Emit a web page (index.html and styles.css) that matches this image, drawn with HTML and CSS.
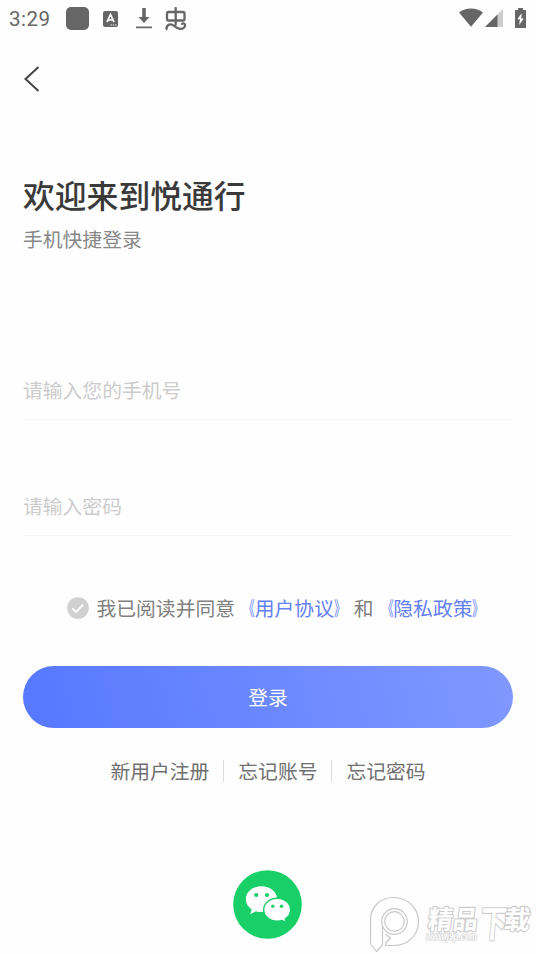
FILE: index.html
```html
<!DOCTYPE html>
<html lang="zh-CN">
<head>
<meta charset="utf-8">
<title>悦通行</title>
<link rel="stylesheet" href="styles.css">
</head>
<body>
<header class="status">
  <span class="time">3:29</span>
  <span class="square"></span>
  <svg class="ime" width="15" height="16" viewBox="0 0 15 16"><rect width="15" height="16" rx="2" fill="#666"/><path d="M4 11.200 7.500 3.500 11 11.200M5.300 8.800h4.400" fill="none" stroke="#fff" stroke-width="1.700"/><path d="M7.500 14h1.300m1 0h1.300m1 0h1.300" stroke="#fff" stroke-width="1.200"/></svg>
  <svg class="download" width="16" height="21" viewBox="0 0 16 21"><path d="M6.200 0h3.600v9H13.500L8 15 2.500 9h3.700zM0 18.600h16v1.700H0z" fill="#666"/></svg>
  <svg class="bug" width="22" height="24" viewBox="0 0 22 24" fill="none" stroke="#666" stroke-width="2.300" stroke-linecap="round" stroke-linejoin="round"><rect x="2" y="5" width="17.500" height="8.500" rx="1.500"/><path d="M2 9.300h17.500" stroke-width="0"/><path d="M10.700 1v16.500M1.500 22c0-5 4.500-5.800 7.500-3.200 3.500 3.400 8.500 4.200 10.600 1 1.400-2.600-.8-4.200-2.600-2.900"/></svg>
  <svg class="wifi" width="24" height="19" viewBox="0 0 24 19"><path d="M0 4.500C6.500-.9 17.500-.9 24 4.500L12 18.800z" fill="#666"/></svg>
  <svg class="signal" width="18" height="18" viewBox="0 0 18 18"><path d="M0 18 18 0v18z" fill="#ccc"/><path d="M0 18 12.500 5.500V18z" fill="#666"/></svg>
  <svg class="battery" width="11" height="20" viewBox="0 0 11 20"><path d="M3 0h5v2h3v18H0V2h3z" fill="#666"/><path d="M6.800 5 2.300 11.300h2.600L4.200 17l4.600-6.600H6.200z" fill="#fff"/></svg>
</header>
<main class="page">
  <button class="back" aria-label="返回"><svg width="18" height="28" viewBox="0 0 18 28"><path d="M15.500 2 2.500 14l13 12" fill="none" stroke="#444" stroke-width="2"/></svg></button>
  <h1>欢迎来到悦通行</h1>
  <p class="sub">手机快捷登录</p>
  <form>
    <input class="phone" type="tel" placeholder="请输入您的手机号">
    <input class="password" type="password" placeholder="请输入密码">
    <div class="agree">
      <svg width="22" height="22" viewBox="0 0 22 22"><circle cx="11" cy="11" r="10.800" fill="#d0d0d0"/><path d="m5.200 11.200 4 3.700 7-7.300" fill="none" stroke="#fff" stroke-width="2.100"/></svg>
      <span>我已阅读并同意<a><i class="open">《</i>用户协议<i class="close">》</i></a>和<a><i class="open">《</i>隐私政策<i class="close">》</i></a></span>
    </div>
    <button class="login" type="button">登录</button>
  </form>
  <nav><a>新用户注册</a><a>忘记账号</a><a>忘记密码</a></nav>
  <svg class="wechat" width="69" height="69" viewBox="0 0 69 69">
    <circle cx="34.500" cy="34.500" r="34.300" fill="#18cf68"/>
    <path d="M28.500 16.300c-8.700 0-15.700 5.700-15.700 13 0 4.200 2.300 7.700 5.900 10.100l-1.500 4.900 5.700-3c1.800.6 3.600.8 5.600.8 8.700 0 15.700-5.500 15.700-12.800s-7-13-15.700-13z" fill="#fff"/>
    <path d="M44.200 28.200c-7.500 0-13.500 5.100-13.500 11.500s6 11.500 13.500 11.500c1.800 0 3.400-.2 4.900-.7l4.300 2.200-1.200-3.900c3.300-2.100 5.400-5.400 5.400-9.100 0-6.400-6-11.500-13.400-11.500z" fill="#fff" stroke="#18cf68" stroke-width="1.400"/>
    <g fill="#18cf68"><circle cx="23.200" cy="25" r="2.100"/><circle cx="34" cy="25" r="2.100"/><circle cx="39.800" cy="36.300" r="1.700"/><circle cx="48.500" cy="36.300" r="1.700"/></g>
  </svg>
</main>
<svg class="watermark" width="167" height="60" viewBox="0 0 167 60" fill="#fff" stroke="#c8c8c8" stroke-width="1.200">
  <path d="M1.500 50V26.500C1.500 12 12 3.500 25 3.500S49.500 14 49.500 27.500 39 51.500 25 51.500h-8.500v-2.500l5-5-5-4M1.500 50l6 7.500 6-6.500V28"/>
  <circle cx="25.500" cy="27.500" r="12.800"/><circle cx="25.500" cy="27.500" r="9.800"/>
  <g class="brand"><text transform="translate(58 35) skewX(-7)" textLength="50" lengthAdjust="spacingAndGlyphs" font-size="26">精品</text><text transform="translate(110 43) skewX(-5)" textLength="27" lengthAdjust="spacingAndGlyphs" font-size="37">下</text><text transform="translate(134 35) skewX(-7)" font-size="26">载</text></g>
  <text class="url" x="57" y="46" textLength="51" lengthAdjust="spacingAndGlyphs">www.j9p.com</text>
</svg>
</body>
</html>
```
FILE: styles.css
```css
* { box-sizing: border-box; }
body { margin: 0; height: 954px; overflow: hidden; position: relative; background: #fefefe; color: #707070; font-family: "Noto Sans CJK SC", sans-serif; font-size: 19.8px; font-weight: 400; }
.status { height: 37px; display: flex; align-items: center; padding: 0 10px 0 9px; }
.time { width: 57px; font: 20.5px/24px Roboto, sans-serif; letter-spacing: .5px; color: #666; }
.square { width: 23px; height: 23px; border-radius: 5px; background: #666; }
.ime { margin-left: 14px; }
.download { margin-left: 18px; }
.bug { margin-left: 13px; }
.wifi { margin-left: auto; margin-bottom: 2px; }
.signal { margin-left: 2px; margin-bottom: 2px; }
.battery { margin-left: 12px; margin-bottom: 2px; }
.page { padding: 0 23px; }
button { border: 0; padding: 0; font: inherit; }
.back { display: block; width: 18px; height: 28px; margin-top: 28px; background: none; }
.back svg { display: block; }
h1 { margin: 78px 0 0; font-size: 31.800px; line-height: 46px; font-weight: 500; color: #3a3a3a; }
.sub { margin: 7px 0 0; line-height: 30px; color: #888; }
input { display: block; width: 100%; padding: 0; border: 0; border-bottom: 1px solid #f4f4f4; background: none; font: inherit; outline: 0; }
input::placeholder { color: #ccc; opacity: 1; }
.phone { height: 60px; margin-top: 106px; }
.password { height: 60px; margin-top: 56px; }
.agree { height: 30px; margin: 57px 0 0 44px; display: flex; align-items: center; gap: 7.500px; line-height: 30px; white-space: nowrap; color: #808080; }
.agree a { color: #6480f4; }
.agree i { display: inline-block; font-style: normal; transform: scaleX(.58); }
.open { transform-origin: 100% 50%; }
.close { transform-origin: 0 50%; }
.login { display: block; width: 490px; height: 62px; margin-top: 43px; padding-bottom: 2px; border-radius: 31px; background: linear-gradient(75deg, #5678ff, #8098ff); color: #fff; font-weight: 400; }
nav { height: 30px; margin-top: 28px; display: flex; justify-content: center; align-items: center; }
nav a { line-height: 22px; padding: 0 14px; }
nav a + a { border-left: 1px solid #ddd; }
.wechat { display: block; margin: 84px auto 0 210px; }
.watermark { position: absolute; left: 369px; top: 894px; }
.brand { font-family: "Noto Sans CJK SC", sans-serif; font-weight: 700; stroke: #ccc; stroke-width: 2.200px; stroke-linejoin: round; paint-order: stroke; }
.url { font: italic 700 10px "Liberation Sans", sans-serif; stroke-width: 1.200px; paint-order: stroke; }
```
